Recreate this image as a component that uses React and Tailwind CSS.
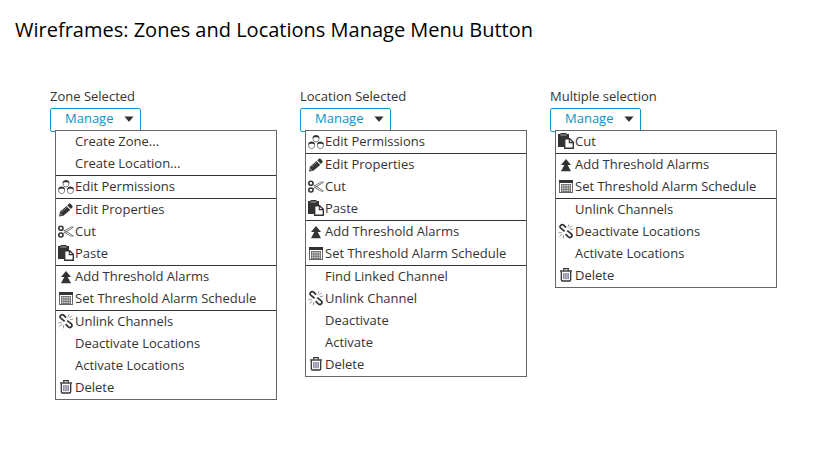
import React from 'react';

const DARK = '#333333';

function Icon({ children }) {
  return (
    <svg width="19" height="22" viewBox="0 0 19 22" fill="none" aria-hidden="true" className="block shrink-0">
      {children}
    </svg>
  );
}

function Person({ x, y }) {
  return (
    <g transform={`translate(${x} ${y})`}>
      <path d="M-2.9 -1.6V0.6C-2.9 2.4 -1.4 3.4 0 3.4S2.9 2.4 2.9 0.6V-1.6" fill="#fff" stroke="#777777" strokeWidth="1" />
      <path d="M-3.3 -0.6C-3.3 -2.8 -1.8 -3.6 0 -3.6S3.3 -2.8 3.3 -0.6C2 -1.6 -2 -1.6 -3.3 -0.6Z" fill={DARK} />
    </g>
  );
}

function PermissionsIcon() {
  return (
    <Icon>
      <Person x={10} y={7.5} />
      <Person x={5.6} y={14.2} />
      <Person x={14.4} y={14.2} />
    </Icon>
  );
}

function PencilIcon() {
  return (
    <Icon>
      <path d="M3 17.4L4 12.8L10.6 6.9L14.2 10.9L7.4 16.8Z" fill={DARK} />
      <path d="M11.3 6.2L12.9 4.8C13.5 4.3 14.3 4.4 14.8 5L16.3 6.7C16.8 7.3 16.8 8 16.2 8.6L14.8 10.1Z" fill={DARK} />
      <path d="M5.6 13L11 8.2" stroke="#999999" strokeWidth="0.7" />
      <path d="M4.1 14.6L5.7 16.4" stroke="#ffffff" strokeWidth="0.7" />
    </Icon>
  );
}

function ScissorsIcon() {
  return (
    <Icon>
      <ellipse cx="4.9" cy="7.2" rx="2.1" ry="2" stroke={DARK} strokeWidth="1.6" />
      <ellipse cx="4.9" cy="14" rx="2.1" ry="2" stroke={DARK} strokeWidth="1.6" />
      <path d="M6.6 8.4L9.4 9.9L17.4 15C16 15.6 14.8 15.2 13.4 14.3L8.2 11" stroke="#666666" strokeWidth="0.9" />
      <path d="M6.6 12.8L9.4 11.3L17.4 6.2C16 5.6 14.8 6 13.4 6.9L8.2 10.2" stroke="#666666" strokeWidth="0.9" />
    </Icon>
  );
}

function PasteIcon() {
  return (
    <Icon>
      <path d="M2 3H4.5V2H10.5V3H13V7H8V16H2Z" fill={DARK} />
      <path d="M4.5 4H10.5" stroke="#aaaaaa" strokeWidth="1" />
      <path d="M8.7 7.7H13.6L17.3 11.3V17.3H8.7Z" fill="#fff" stroke={DARK} strokeWidth="1.4" />
      <path d="M13.3 7.7V11.6H17.3" stroke={DARK} strokeWidth="1.1" />
    </Icon>
  );
}

function AlarmIcon() {
  return (
    <Icon>
      <path d="M10 5L15 11H11.7L15 17.2H5L8.3 11H5Z" fill={DARK} />
    </Icon>
  );
}

function CalendarIcon() {
  return (
    <Icon>
      <rect x="3.5" y="4.5" width="13" height="12" fill="#fff" stroke="#666666" />
      <rect x="3" y="4" width="14" height="3" fill={DARK} />
      <rect x="5" y="8.5" width="10" height="7" fill="#dddddd" />
      <path d="M5 8.5H15M5 11H15M5 13.3H15M5 15.5H15M5.5 8V16M7.8 8V16M10 8V16M12.3 8V16M14.5 8V16" stroke="#666666" strokeWidth="0.8" />
    </Icon>
  );
}

function UnlinkIcon() {
  return (
    <Icon>
      <path d="M8.6 10.4L4.8 7.2C3.7 6.1 3.8 5.1 4.7 4.3C5.7 3.4 6.9 3.5 7.9 4.4L10 6.6" stroke={DARK} strokeWidth="1.8" />
      <path d="M11.2 9.6L15 12.6C16.3 13.7 16.3 14.9 15.3 15.8C14.3 16.7 13.1 16.6 12 15.6L9.6 13" stroke={DARK} strokeWidth="1.8" />
      <path d="M12 6.4L12.9 3.4M13.2 7.3L15.8 4.7M13.8 8.7L17.2 8M2.4 12L5.8 11.4M3.5 15.6L6.4 12.9M7.3 17.3L7.8 13.9" stroke="#888888" strokeWidth="0.9" />
    </Icon>
  );
}

function TrashIcon() {
  return (
    <Icon>
      <path d="M4 6H16" stroke={DARK} strokeWidth="1.4" />
      <path d="M7.7 5.5V3.7H12.3V5.5" stroke={DARK} strokeWidth="1.2" />
      <path d="M5.3 6.5V14.8C5.3 15.6 5.8 16 6.5 16H13.5C14.2 16 14.7 15.6 14.7 14.8V6.5" stroke={DARK} strokeWidth="1.3" />
      <path d="M7.9 8V14.3M10 8V14.3M12.1 8V14.3" stroke="#555577" strokeWidth="1.1" />
    </Icon>
  );
}

const columns = [
  {
    title: 'Zone Selected',
    groups: [
      [['Create Zone...'], ['Create Location...']],
      [['Edit Permissions', PermissionsIcon]],
      [['Edit Properties', PencilIcon], ['Cut', ScissorsIcon], ['Paste', PasteIcon]],
      [['Add Threshold Alarms', AlarmIcon], ['Set Threshold Alarm Schedule', CalendarIcon]],
      [['Unlink Channels', UnlinkIcon], ['Deactivate Locations'], ['Activate Locations'], ['Delete', TrashIcon]],
    ],
  },
  {
    title: 'Location Selected',
    groups: [
      [['Edit Permissions', PermissionsIcon]],
      [['Edit Properties', PencilIcon], ['Cut', ScissorsIcon], ['Paste', PasteIcon]],
      [['Add Threshold Alarms', AlarmIcon], ['Set Threshold Alarm Schedule', CalendarIcon]],
      [['Find Linked Channel'], ['Unlink Channel', UnlinkIcon], ['Deactivate'], ['Activate'], ['Delete', TrashIcon]],
    ],
  },
  {
    title: 'Multiple selection',
    groups: [
      [['Cut', PasteIcon]],
      [['Add Threshold Alarms', AlarmIcon], ['Set Threshold Alarm Schedule', CalendarIcon]],
      [['Unlink Channels'], ['Deactivate Locations', UnlinkIcon], ['Activate Locations'], ['Delete', TrashIcon]],
    ],
  },
];

function ManageMenu({ title, groups }) {
  return (
    <section className="w-[227px]">
      <h2 className="h-6 text-[13px] leading-6">{title}</h2>
      <button
        type="button"
        aria-haspopup="menu"
        aria-expanded="true"
        className="flex h-6 w-[91px] items-center justify-between rounded-[2px] border border-[#0a9bc8] pr-[6px] pb-[2px] pl-[14px] text-[13px] text-[#0a93c4]"
      >
        Manage
        <svg width="10" height="6" viewBox="0 0 10 6" aria-hidden="true">
          <path d="M0.4 0.5H9.6L5.6 5.2Q5 5.8 4.4 5.2Z" fill={DARK} />
        </svg>
      </button>
      <div role="menu" className="relative -mt-[2px] ml-[5px] divide-y divide-[#333333] border border-[#666666] bg-white">
        {groups.map((group, i) => (
          <div key={i} role="group">
            {group.map(([label, Glyph]) => (
              <button key={label} type="button" role="menuitem" className="flex h-[22px] w-full items-start text-left text-[13px] leading-[20px] whitespace-nowrap">
                {Glyph ? <Glyph /> : <span className="w-[19px] shrink-0" />}
                {label}
              </button>
            ))}
          </div>
        ))}
      </div>
    </section>
  );
}

export default function App() {
  return (
    <main className="min-h-screen bg-white font-['Open_Sans','Noto_Sans',sans-serif] text-[#333333]">
      <h1 className="px-[15px] pt-[14px] text-[20px] leading-8 text-black">Wireframes: Zones and Locations Manage Menu Button</h1>
      <div className="flex flex-wrap gap-x-[23px] gap-y-8 pt-[38px] pl-[50px]">
        {columns.map((column) => (
          <ManageMenu key={column.title} {...column} />
        ))}
      </div>
    </main>
  );
}
